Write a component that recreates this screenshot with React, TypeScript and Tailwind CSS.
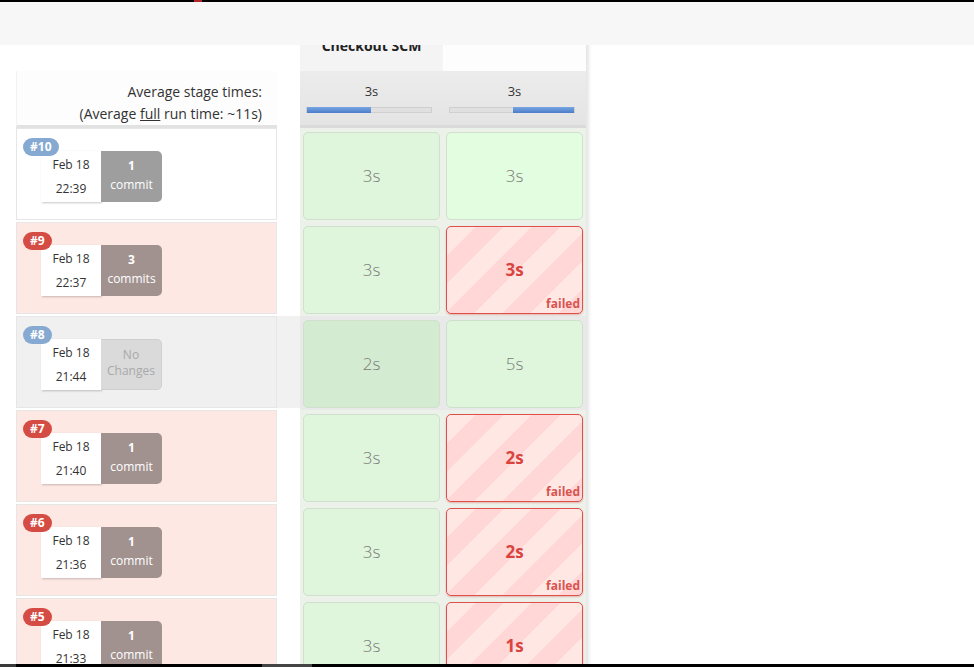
import React from 'react'

type Cell = { t: string; failed?: boolean; bg?: string }
type Run = {
  n: number
  failed: boolean
  hover?: boolean
  time: string
  commits?: string
  label?: string
  cells: Cell[]
}

const runs: Run[] = [
  { n: 10, failed: false, time: '22:39', commits: '1', label: 'commit', cells: [{ t: '3s' }, { t: '3s', bg: 'bg-[#e3fde0]' }] },
  { n: 9, failed: true, time: '22:37', commits: '3', label: 'commits', cells: [{ t: '3s' }, { t: '3s', failed: true }] },
  { n: 8, failed: false, hover: true, time: '21:44', cells: [{ t: '2s', bg: 'bg-[#d3ebd1]' }, { t: '5s' }] },
  { n: 7, failed: true, time: '21:40', commits: '1', label: 'commit', cells: [{ t: '3s' }, { t: '2s', failed: true }] },
  { n: 6, failed: true, time: '21:36', commits: '1', label: 'commit', cells: [{ t: '3s' }, { t: '2s', failed: true }] },
  { n: 5, failed: true, time: '21:33', commits: '1', label: 'commit', cells: [{ t: '3s' }, { t: '1s', failed: true }] },
]

function RunLabel({ run }: { run: Run }) {
  const rowBg = run.hover ? 'bg-[#f0f0f0]' : run.failed ? 'bg-[#fee8e4]' : 'bg-white'
  return (
    <div className="flex h-[94px] w-[284px]">
      <div className={`flex h-[92px] w-[284px] ${run.hover ? 'bg-[#f1f1f1]' : ''}`}>
        <div className={`relative h-[92px] w-[261px] border border-[#e6e6e6] pl-[24px] pt-[22px] ${rowBg}`}>
          <span
            className={`absolute left-[6px] top-[9px] z-[1] flex h-[18px] items-center rounded-full px-[7px] text-[12px] font-bold text-white ${
              run.failed ? 'bg-[#d54c45]' : 'bg-[#86a9d2]'
            }`}
          >
            #{run.n}
          </span>
          <div className="flex">
            <div className="flex h-[51px] w-[60px] flex-col items-center justify-center bg-white text-[12px] leading-[24px] text-[#333] shadow-[1px_1px_2px_rgba(0,0,0,0.22)]">
              <span>Feb 18</span>
              <span>{run.time}</span>
            </div>
            {run.commits ? (
              <div
                className={`flex h-[51px] w-[61px] flex-col items-center justify-center rounded-r-[5px] pb-[3px] text-[12px] leading-[19px] text-white ${
                  run.failed ? 'bg-[#a1928f]' : 'bg-[#9e9e9e]'
                }`}
              >
                <span className="font-bold">{run.commits}</span>
                <span>{run.label}</span>
              </div>
            ) : (
              <div className="flex h-[51px] w-[61px] flex-col items-center justify-center rounded-r-[5px] border border-l-0 border-[#cfcfcf] bg-[#dadada] pb-[4px] text-[12px] leading-[16px] text-[#a9a9a9]">
                <span>No</span>
                <span>Changes</span>
              </div>
            )}
          </div>
        </div>
      </div>
    </div>
  )
}

function StageCell({ cell, hover }: { cell: Cell; hover?: boolean }) {
  return (
    <div className={`h-[94px] w-[143px] px-[3px] pb-[2px] pt-[4px] ${hover ? 'bg-[#e9e9e9]' : 'bg-[#ecf2ea]'}`}>
      {cell.failed ? (
        <div className="relative flex h-[88px] items-center justify-center rounded-[5px] border border-[#e0504b] bg-[image:repeating-linear-gradient(135deg,#ffe8e4_0px,#ffe8e4_20px,#ffd7d7_20px,#ffd7d7_40px)] shadow-[0_1px_2px_rgba(210,60,60,0.35)]">
          <span className="text-[17px] font-bold text-[#d9443f]">{cell.t}</span>
          <span className="absolute bottom-[1px] right-[2px] text-[12px] font-bold leading-[16px] text-[#d9534f]">failed</span>
        </div>
      ) : (
        <div
          className={`flex h-[88px] items-center justify-center rounded-[5px] border border-[#cfe0cc] text-[17px] font-light text-[#7b7b7b] ${
            cell.bg ?? 'bg-[#dff6dc]'
          }`}
        >
          {cell.t}
        </div>
      )}
    </div>
  )
}

function AvgCell({ from, to }: { from: string; to: string }) {
  return (
    <div className="flex h-[57px] w-[143px] flex-col border-b-[3px] border-[#dadada] bg-[linear-gradient(#ececec,#e4e4e4)] px-[6px] pt-[10px]">
      <div className="text-center text-[13px] leading-[20px] text-[#333]">3s</div>
      <div className="relative mt-[6px] h-[6px] w-[126px] border border-[#cfcfcf] bg-[#e0e0e0]">
        <div className={`absolute bottom-[-1px] top-[-1px] bg-[linear-gradient(#78a6e3,#4a7cc8)] ${from} ${to}`} />
      </div>
    </div>
  )
}

export default function App() {
  return (
    <div className="relative h-[667px] w-full overflow-hidden bg-white font-['Open_Sans','Noto_Sans',sans-serif]">
      <div className="absolute left-0 right-0 top-0 z-10 h-[45px] border-t-2 border-black bg-[#f7f7f7]">
        <div className="absolute left-[194px] top-[-2px] h-[2px] w-[8px] bg-[#b2262b]" />
      </div>

      <div className="flex pl-[16px]">
        {/* build labels */}
        <div className="flex w-[284px] flex-col">
          <div className="h-[71px]" />
          <div className="h-[57px] w-[261px] border-b-[3px] border-l border-[#e2e2e2] border-l-[#f2f2f2] bg-[#fdfdfd] pr-[15px] pt-[10px] text-right text-[14px] leading-[22px] text-[#333]">
            <div>Average stage times:</div>
            <div>
              (Average <span className="underline">full</span> run time: ~11s)
            </div>
          </div>
          {runs.map((r) => (
            <RunLabel key={r.n} run={r} />
          ))}
        </div>

        {/* stage table */}
        <div className="flex w-[286px] flex-col shadow-[3px_0_3px_rgba(0,0,0,0.1)]">
          <div className="flex h-[71px]">
            <div className="flex w-[143px] justify-center bg-[#f4f4f4] pt-[38px] text-[14px] font-bold leading-[16px] text-[#222]">
              Checkout SCM
            </div>
            <div className="w-[143px] border-l border-white bg-[#fdfdfd]" />
          </div>
          <div className="flex">
            <AvgCell from="left-0" to="w-[52%]" />
            <AvgCell from="left-[51%]" to="right-0" />
          </div>
          {runs.map((r) => (
            <div key={r.n} className="flex">
              {r.cells.map((c, i) => (
                <StageCell key={i} cell={c} hover={r.hover} />
              ))}
            </div>
          ))}
        </div>
      </div>

      <div className="absolute bottom-0 left-0 right-0 flex h-[3px] bg-black">
        <div className="w-[16px] bg-[#3a3a3a]" />
        <div className="ml-[246px] w-[50px] bg-[#444]" />
      </div>
    </div>
  )
}
